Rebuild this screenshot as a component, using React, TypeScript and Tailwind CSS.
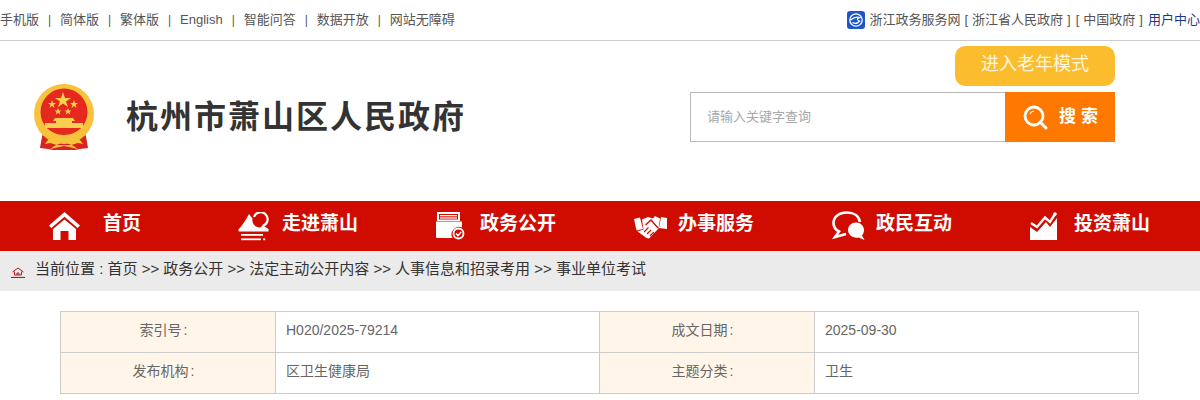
const font = "font-['Liberation_Sans','Noto_Sans_CJK_SC',sans-serif]";

const topLinks = ["手机版", "简体版", "繁体版", "English", "智能问答", "数据开放", "网站无障碍"];

const HomeIcon = () => (
  <svg width="31" height="28" viewBox="0 0 31 28" fill="#fff">
    <path d="M15.5 0 L31 13.5 L28.6 16 L15.5 4.8 L2.4 16 L0 13.5 Z" />
    <path d="M15.5 7.5 L27 17 V28 H19.5 V19 H11.5 V28 H4 V17 Z" />
  </svg>
);

const MountainIcon = () => (
  <svg width="31" height="29" viewBox="0 0 31 29" fill="#fff">
    <path d="M0 18 C3 15 6 11 11 2 L14.5 6.5 C13.5 11 17 15.5 22 15.5 L25 13.5 L30.5 17 V19.5 H1 Z" />
    <path d="M16 5 A7 7 0 1 1 24.5 14" fill="none" stroke="#fff" strokeWidth="2.2" />
    <rect x="3" y="22" width="22" height="1.8" />
    <rect x="3" y="26.4" width="20" height="1.8" />
    <rect x="25" y="26.4" width="2.2" height="1.8" />
  </svg>
);

const DocIcon = () => (
  <svg width="29" height="28" viewBox="0 0 29 28" fill="#fff">
    <path fillRule="evenodd" d="M1 0 H24 V9 H1 Z M3 2 V7.5 H22 V2 Z" />
    <rect x="4" y="3" width="17" height="1.3" />
    <rect x="4" y="5.4" width="17" height="1.2" />
    <path d="M0 9.5 H26 V15.5 A7.5 7.5 0 0 0 16.5 26 H1 Q0 26 0 25 Z" />
    <circle cx="22.5" cy="21.5" r="5" fill="none" stroke="#fff" strokeWidth="1.8" />
    <path d="M20 21.5 L22 23.5 L25.2 20" fill="none" stroke="#fff" strokeWidth="1.6" />
  </svg>
);

const HandshakeIcon = () => (
  <svg width="33" height="25" viewBox="0 0 33 25" fill="#fff">
    <path d="M0 5 L6 3.5 L9 15 L2.5 16.5 Z" />
    <path d="M33 4 L27 3 L25 14 L33 15 Z" />
    <path d="M8 5.5 L14 3 L19 4.5 L21 2 L26 4.5 L24.5 14.5 L15 24.5 L12.5 24 L3.5 17.5 L9.5 15.5 Z" />
    <path d="M11.5 11 L17 6 L24 14" fill="none" stroke="#d00c00" strokeWidth="1.4" />
    <path d="M13 20 L17 16 M10 18 L14.5 13.5 M16 22 L20 18" fill="none" stroke="#d00c00" strokeWidth="1.1" />
  </svg>
);

const ChatIcon = () => (
  <svg width="33" height="30" viewBox="0 0 33 30" fill="#fff">
    <path
      d="M15 1.5 C7 1.5 1.5 6 1.5 12 C1.5 16 4 19 7 20.5 L3 26 L14 23"
      fill="none"
      stroke="#fff"
      strokeWidth="2.6"
    />
    <path d="M15 1.5 C22 1.5 27 5 28 11" fill="none" stroke="#fff" strokeWidth="2.6" />
    <path d="M24 11.5 C28.5 11.5 32 15 32 19 C32 21.5 31 23.5 30 24.5 L32.5 29 L26.5 26.5 C21 27.5 16 24 16 19 C16 15 19.5 11.5 24 11.5 Z" />
  </svg>
);

const ChartIcon = () => (
  <svg width="27" height="28" viewBox="0 0 27 28" fill="#fff">
    <path d="M0 15 L7 20 L16 10 L20 15 L27 6 V28 H0 Z" />
    <path d="M1 11 L7 15 L15 5.5 L20 10 L25 2" fill="none" stroke="#fff" strokeWidth="2.4" />
    <circle cx="25" cy="2" r="1.8" />
  </svg>
);

const navItems = [
  { label: "首页", icon: <HomeIcon />, className: "pl-[49px] gap-[23px]" },
  { label: "走进萧山", icon: <MountainIcon />, className: "pl-[40px] gap-[13px]" },
  { label: "政务公开", icon: <DocIcon />, className: "pl-[40px] gap-[15px]" },
  { label: "办事服务", icon: <HandshakeIcon />, className: "pl-[40px] gap-[11px]" },
  { label: "政民互动", icon: <ChatIcon />, className: "pl-[40px] gap-[11px]" },
  { label: "投资萧山", icon: <ChartIcon />, className: "pl-[40px] gap-[17px]" },
];

const Emblem = () => (
  <svg width="62" height="67" viewBox="0 0 62 67">
    <path d="M11 44 C9 52 8 58 7 64 L15 65 L20 66 H42 L47 65 L55 64 C54 58 53 52 51 44 Z" fill="#d8231f" />
    <circle cx="31" cy="30" r="30" fill="#f7c23c" />
    <circle cx="31" cy="28" r="23.5" fill="#e5291f" />
    <path d="M7 44 C13 54 23 58 31 58 C39 58 49 54 55 44 L51 42 C45 48 38 51 31 51 C24 51 17 48 11 42 Z" fill="#f7c23c" />
    <polygon points="30,8 32,14 38,14 33,17.5 35,23 30,19.5 25,23 27,17.5 22,14 28,14" fill="#f9d34f" />
    <polygon points="19,16 20,19 23,19 20.5,21 21.5,24 19,22 16.5,24 17.5,21 15,19 18,19" fill="#f9d34f" />
    <polygon points="41,16 42,19 45,19 42.5,21 43.5,24 41,22 38.5,24 39.5,21 37,19 40,19" fill="#f9d34f" />
    <polygon points="25,24 26,26.5 28.5,26.5 26.5,28 27.3,30.5 25,29 22.7,30.5 23.5,28 21.5,26.5 24,26.5" fill="#f9d34f" />
    <polygon points="35,24 36,26.5 38.5,26.5 36.5,28 37.3,30.5 35,29 32.7,30.5 33.5,28 31.5,26.5 34,26.5" fill="#f9d34f" />
    <path d="M22 34 H40 L42 37 H39 V39 H23 V37 H20 Z" fill="#f9cf52" />
    <rect x="12" y="39" width="38" height="5" fill="#f9cf52" />
    <path d="M12 60 C17 52 22 51 26 55 L31 51 L36 55 C40 51 45 52 50 60 L45 59 L38 61 L31 57 L24 61 L17 59 Z" fill="#f7c23c" />
    <path d="M17 65 L23 61 H39 L45 65 L31 62 Z" fill="#f7c23c" />
  </svg>
);

const ZjIcon = () => (
  <svg width="18" height="18" viewBox="0 0 18 18">
    <rect width="18" height="18" rx="3" fill="#1e55c8" />
    <circle cx="9" cy="9" r="6.2" fill="none" stroke="#fff" strokeWidth="1.3" />
    <path d="M3.5 9 C7 6 10 5.5 13 6.5 C10 7.5 9 8.5 12.5 10 C10 13 7 12.5 5.5 11.5" fill="none" stroke="#fff" strokeWidth="1.2" />
  </svg>
);

const SmallHome = () => (
  <svg width="14" height="11" viewBox="0 0 14 11" fill="none" stroke="#b3191c" strokeWidth="1">
    <path d="M1.5 5 L7 1 L12.5 5" />
    <path d="M3.5 4.5 V8 H10.5 V4.5" />
    <path d="M6 8 V6 H8 V8" />
    <path d="M0 10.5 H14" strokeWidth="1.2" />
  </svg>
);

const App = () => {
  return (
    <div className={`${font} h-[400px] w-[1200px] overflow-hidden bg-white`}>
      {/* top bar */}
      <div className="flex h-[41px] items-center justify-between border-b border-[#cccccc] text-[13px] text-[#555555]">
        <div className="flex items-center">
          {topLinks.map((link, i) => (
            <div key={link} className="flex items-center">
              {i > 0 && <span className="w-[21px] text-center text-[12px]">|</span>}
              <a>{link}</a>
            </div>
          ))}
        </div>
        <div className="flex items-center">
          <ZjIcon />
          <a className="ml-[4px]">浙江政务服务网</a>
          <span className="ml-[4px]">[</span>
          <a className="ml-[4px]">浙江省人民政府</a>
          <span className="ml-[4px]">]</span>
          <span className="ml-[5px]">[</span>
          <a className="ml-[4px]">中国政府</a>
          <span className="ml-[4px]">]</span>
          <a className="ml-[5px] text-[#1c3a8c]">用户中心</a>
        </div>
      </div>

      {/* logo + search */}
      <div className="flex h-[160px] justify-between pr-[85px]">
        <div className="flex items-start pl-[33px] pt-[43px]">
          <Emblem />
          <h1 className="ml-[31px] mt-[12px] text-[32px] font-bold leading-[42px] tracking-[2px] text-[#333333]">
            杭州市萧山区人民政府
          </h1>
        </div>
        <div className="flex flex-col items-end pt-[5px]">
          <div className="flex h-[40px] w-[160px] items-center justify-center rounded-[10px] bg-[#fbbd2e] pb-[4px] text-[18px] text-[#fff7dd]">
            进入老年模式
          </div>
          <div className="mt-[6px] flex h-[50px]">
            <div className="flex w-[315px] items-center border border-r-0 border-[#bbbbbb] pl-[16px] text-[13px] text-[#a8a8a8]">
              请输入关键字查询
            </div>
            <div className="flex w-[110px] items-center bg-[#ff7800] pl-[18px] text-white">
              <svg width="25" height="25" viewBox="0 0 25 25" fill="none" stroke="#fff">
                <circle cx="11" cy="11" r="9" strokeWidth="2.8" />
                <path d="M17.5 17.5 L23 23" strokeWidth="3" strokeLinecap="round" />
                <path d="M7 9 A5 5 0 0 1 11 6" strokeWidth="1.2" />
              </svg>
              <span className="ml-[11px] text-[17px] font-bold tracking-[5px]">搜索</span>
            </div>
          </div>
        </div>
      </div>

      {/* nav */}
      <nav className="flex h-[50px] bg-[#d00c00]">
        {navItems.map((item) => (
          <a key={item.label} className={`flex w-[198px] items-center ${item.className}`}>
            {item.icon}
            <span className="-mt-[4px] text-[19px] font-bold text-white">{item.label}</span>
          </a>
        ))}
      </nav>

      {/* breadcrumb */}
      <div className="flex h-[40px] items-center bg-[#ebebeb] pb-[4px] pl-[11px] text-[15px] text-[#333333]">
        <span className="mt-[6px] mr-[10px] flex">
          <SmallHome />
        </span>
        当前位置 : 首页 &gt;&gt; 政务公开 &gt;&gt; 法定主动公开内容 &gt;&gt; 人事信息和招录考用 &gt;&gt; 事业单位考试
      </div>

      {/* article info */}
      <table className="ml-[60px] mt-[20px] w-[1079px] table-fixed border-collapse text-[14px] text-[#666666]">
        <tbody>
          <tr className="h-[41px]">
            <td className="w-[215px] border border-[#cccccc] bg-[#fff5e9] pb-[4px] pr-[9px] text-center">索引号<span className="ml-[2px]">:</span></td>
            <td className="w-[324px] border border-[#cccccc] pb-[4px] pl-[10px]">H020/2025-79214</td>
            <td className="w-[215px] border border-[#cccccc] bg-[#fff5e9] pb-[4px] pr-[9px] text-center">成文日期<span className="ml-[2px]">:</span></td>
            <td className="border border-[#cccccc] pb-[4px] pl-[10px]">2025-09-30</td>
          </tr>
          <tr className="h-[41px]">
            <td className="border border-[#cccccc] bg-[#fff5e9] pb-[4px] pr-[9px] text-center">发布机构<span className="ml-[2px]">:</span></td>
            <td className="border border-[#cccccc] pb-[4px] pl-[10px]">区卫生健康局</td>
            <td className="border border-[#cccccc] bg-[#fff5e9] pb-[4px] pr-[9px] text-center">主题分类<span className="ml-[2px]">:</span></td>
            <td className="border border-[#cccccc] pb-[4px] pl-[10px]">卫生</td>
          </tr>
        </tbody>
      </table>
    </div>
  );
};

export default App;
